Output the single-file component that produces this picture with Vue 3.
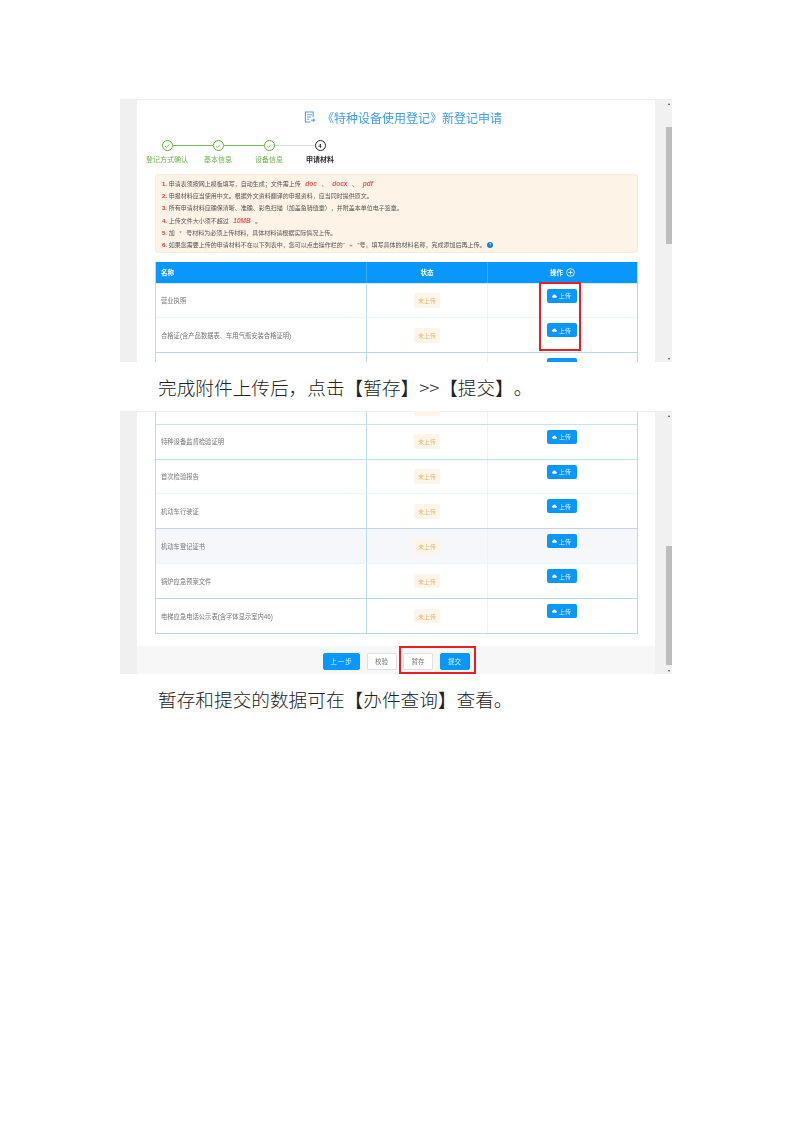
<script setup>
const steps = [
  { label: '登记方式确认', state: 'done' },
  { label: '基本信息', state: 'done' },
  { label: '设备信息', state: 'done' },
  { label: '申请材料', state: 'active' }
]
const rowsA = [
  { name: '营业执照', line: 'pale' },
  { name: '合格证(含产品数据表、车用气瓶安装合格证明)', line: 'blue' },
  { name: '', line: 'pale', cut: true }
]
const rowsB = [
  { name: '特种设备监督检验证明', line: 'thick' },
  { name: '首次检验报告', line: 'pale' },
  { name: '机动车行驶证', line: 'grey' },
  { name: '机动车登记证书', line: 'pale', hover: true },
  { name: '锅炉应急预案文件', line: 'blue' },
  { name: '电梯应急电话公示表(含字体显示室内46)', line: 'blue' }
]
</script>

<template>
  <div class="page">
    <section class="shot">
      <div class="main">
        <h1 class="title">
          <svg class="doc" viewBox="0 0 12 13" width="11" height="12">
            <path d="M10 6.500V1H1.500v11H7" fill="none" stroke="#4fa3ec" stroke-width="1.200" />
            <path d="M3.500 4h5M3.500 6.500h4M3.500 9h2" stroke="#4fa3ec" stroke-width="1.100" />
            <path d="M7.500 10h4M9.800 8.200 11.600 10l-1.800 1.800" fill="none" stroke="#4fa3ec" stroke-width="1.100" />
          </svg>
          <span>《特种设备使用登记》新登记申请</span>
        </h1>

        <div class="steps">
          <div v-for="(s, i) in steps" :key="s.label" class="step" :class="s.state">
            <div class="head">
              <i class="seg" :class="{ none: i === 0, grey: i === 3 }"></i>
              <span class="dot">
                <svg v-if="s.state === 'done'" viewBox="0 0 10 10" width="8" height="8">
                  <path d="M2.500 5.200 4.400 7l3.200-3.800" fill="none" stroke="#6bb84a" stroke-width="1" />
                </svg>
                <b v-else>4</b>
              </span>
              <i class="seg" :class="{ none: i === 3, grey: i === 2 }"></i>
            </div>
            <div class="label">{{ s.label }}</div>
          </div>
        </div>

        <div class="alert">
          <p><b>1.</b> 申请表须按网上模板填写，自动生成；文件需上传 <em>doc</em> 、 <em>docx</em> 、 <em>pdf</em></p>
          <p><b>2.</b> 申报材料应当使用中文。根据外文资料翻译的申报资料，应当同时提供原文。</p>
          <p><b>3.</b> 所有申请材料应确保清晰、准确、彩色扫描（加盖鱼骑缝章），并附盖本单位电子签章。</p>
          <p><b>4.</b> 上传文件大小须不超过 <em>10MB</em> 。</p>
          <p><b>5.</b> 加 <u>*</u> 号材料为必须上传材料，具体材料请根据实际情况上传。</p>
          <p><b>6.</b> 如果您需要上传的申请材料不在以下列表中，您可以点击操作栏的“ <u>+</u> ”号，填写具体的材料名称，完成添加后再上传。 <span class="info">?</span></p>
        </div>

        <div class="table">
          <div class="row header">
            <div class="c1">名称</div>
            <div class="c2">状态</div>
            <div class="c3">
              操作
              <svg viewBox="0 0 10 10" width="9" height="9">
                <circle cx="5" cy="5" r="4.300" fill="none" stroke="#fff" stroke-width="0.9" />
                <path d="M5 2.700v4.600M2.700 5h4.600" stroke="#fff" stroke-width="0.9" />
              </svg>
            </div>
          </div>
          <div v-for="r in rowsA" :key="r.name" class="row" :class="r.line">
            <div class="c1">{{ r.name }}</div>
            <div class="c2"><span v-if="!r.cut" class="tag">未上传</span></div>
            <div class="c3">
              <button class="upload">
                <template v-if="!r.cut">
                  <svg viewBox="0 0 10 8" width="5" height="4"><path d="M2.500 7.500a2.200 2.200 0 0 1-.3-4.400 3 3 0 0 1 5.700.3 2 2 0 0 1-.3 4.100z" fill="#fff" /></svg>
                  上传
                </template>
              </button>
            </div>
          </div>
        </div>
      </div>
      <div class="scrollbar">
        <i class="arrow up"></i>
        <i class="thumb first"></i>
        <i class="arrow down"></i>
      </div>
      <div class="mark mark-upload"></div>
    </section>

    <p class="caption">完成附件上传后，点击【暂存】&gt;&gt;【提交】。</p>

    <section class="shot">
      <div class="main second">
        <div class="table">
          <div class="row stub thick">
            <div class="c1"></div>
            <div class="c2"><span class="tag"></span></div>
            <div class="c3"></div>
          </div>
          <div v-for="r in rowsB" :key="r.name" class="row" :class="[r.line, { hover: r.hover }]">
            <div class="c1">{{ r.name }}</div>
            <div class="c2"><span class="tag">未上传</span></div>
            <div class="c3">
              <button class="upload">
                <svg viewBox="0 0 10 8" width="5" height="4"><path d="M2.500 7.500a2.200 2.200 0 0 1-.3-4.400 3 3 0 0 1 5.700.3 2 2 0 0 1-.3 4.100z" fill="#fff" /></svg>
                上传
              </button>
            </div>
          </div>
        </div>
        <div class="footer">
          <button class="btn primary wide">上一步</button>
          <button class="btn">校验</button>
          <button class="btn">暂存</button>
          <button class="btn primary">提交</button>
        </div>
      </div>
      <div class="scrollbar">
        <i class="arrow up"></i>
        <i class="thumb last"></i>
        <i class="arrow down"></i>
      </div>
      <div class="mark mark-save"></div>
    </section>

    <p class="caption">暂存和提交的数据可在【办件查询】查看。</p>
  </div>
</template>

<style scoped>
.page {
  width: 552px;
  margin-left: 120px;
  padding-top: 99px;
  font-family: "Liberation Sans", "Noto Sans CJK SC", sans-serif;
  text-spacing-trim: space-all;
}
.shot {
  position: relative;
  display: flex;
  height: 263px;
  overflow: hidden;
  background: #f0f0f0;
  filter: blur(0.45px);
}
.main {
  box-sizing: border-box;
  width: 518px;
  margin-left: 17px;
  padding: 0 17px 0 18px;
  background: #fff;
  border-top: 1px solid #eee;
}
.scrollbar {
  display: flex;
  flex-direction: column;
  align-items: flex-end;
  width: 17px;
  background: #f1f1f1;
  border-top: 1px solid #eee;
}
.arrow {
  width: 6px;
  height: 3px;
  margin: 3px 0 0;
  position: relative;
}
.arrow::after {
  content: "";
  position: absolute;
  left: 1.500px;
  top: 0;
  border-left: 1.500px solid transparent;
  border-right: 1.500px solid transparent;
}
.arrow.up::after { border-bottom: 2px solid #444; }
.arrow.down::after { border-top: 2px solid #444; }
.thumb {
  display: block;
  width: 6.500px;
  background: #bdbdbd;
}
.thumb.first { height: 117px; margin-top: 21px; margin-bottom: 111px; }
.thumb.last { height: 119px; margin-top: 128px; margin-bottom: 2px; }
.title {
  display: flex;
  align-items: center;
  justify-content: center;
  gap: 7px;
  height: 24px;
  margin: 5px 0 0 0;
  padding-left: 13px;
  font-size: 12px;
  font-weight: 400;
  color: #3f9cf0;
  font-family: "Noto Sans CJK SC", sans-serif;
}
.steps {
  display: flex;
  margin: 11px 0 0 -13.500px;
}
.step {
  width: 51px;
  text-align: center;
}
.head {
  display: flex;
  align-items: center;
}
.seg {
  flex: 1;
  height: 1.500px;
  background: #82b266;
}
.seg.none { background: none; }
.seg.grey { background: #d9d9e2; }
.dot {
  display: flex;
  align-items: center;
  justify-content: center;
  box-sizing: border-box;
  width: 11px;
  height: 11px;
  border: 1.300px solid #5cb531;
  border-radius: 50%;
}
.active .dot { border-color: #222; }
.dot b { font-size: 6px; line-height: 1; color: #222; }
.label {
  margin-top: 4px;
  font-size: 7px;
  line-height: 10px;
  white-space: nowrap;
  color: #6fb34a;
}
.active .label { color: #333; font-weight: 700; }
.alert {
  box-sizing: border-box;
  height: 79px;
  margin-top: 9px;
  padding: 3px 0 0 6px;
  background: #fdf3e7;
  border: 1px solid #f9ebd9;
  border-radius: 3px;
}
.alert p {
  height: 12.200px;
  margin: 0;
  font-size: 6px;
  line-height: 12.200px;
  white-space: pre;
  color: #555;
}
.alert b { color: #e0392f; }
.alert em { margin: 0 3px; color: #ee5a5a; font-weight: 700; font-size: 6.500px; }
.alert u { color: #ee4a4a; text-decoration: none; margin: 0 3px; }
.info {
  display: inline-flex;
  align-items: center;
  justify-content: center;
  vertical-align: middle;
  width: 6px;
  height: 6px;
  border-radius: 50%;
  background: #1c7fd6;
  color: #fff;
  font-size: 4px;
  line-height: 1;
}
.table {
  box-sizing: border-box;
  margin-top: 9px;
  border-left: 1px solid #b9dde8;
  border-right: 1px solid #bcd6ea;
}
.second .table {
  margin-top: 0;
}
.row {
  display: flex;
  box-sizing: border-box;
  height: 34.900px;
  font-size: 6.300px;
  color: #777;
  border-bottom: 1px solid #e4f8f8;
}
.row.blue { border-bottom-color: #b9d9e8; }
.row.grey { border-bottom-color: #c5d3e4; }
.row.thick { border-bottom: 1.500px solid #c5e4ee; }
.row.hover { background: #f5f7fa; }
.c1, .c2, .c3 { box-sizing: border-box; }
.c1 {
  display: flex;
  align-items: center;
  width: 211px;
  padding-left: 5px;
  border-right: 1px solid #b9dde8;
}
.c2 {
  display: flex;
  align-items: center;
  justify-content: center;
  width: 121px;
  border-right: 1px solid #e2f7f7;
}
.c3 {
  display: flex;
  flex: 1;
  justify-content: center;
  padding: 5px 2px 0 0;
}
.row.header {
  height: 21.500px;
  background: #0a97fb;
  color: #fff;
  font-weight: 700;
  font-size: 6.500px;
  border-bottom: 1px solid #cfeef8;
}
.header .c1, .header .c2 { border-right-color: #3aaafa; }
.header .c3 {
  align-items: center;
  gap: 3px;
  padding: 0;
}
.tag {
  display: flex;
  align-items: center;
  justify-content: center;
  width: 26px;
  height: 14.500px;
  border-radius: 2px;
  background: #fdf5ea;
  color: #e8b46c;
  font-size: 6px;
}
.upload {
  display: flex;
  align-items: center;
  justify-content: center;
  gap: 2px;
  width: 30px;
  height: 14px;
  padding: 0;
  border: 0;
  border-radius: 2px;
  background: #0a97fb;
  color: #d8eeff;
  font: 6px "Noto Sans CJK SC", sans-serif;
}
.row.stub { height: 12.700px; }
.stub .c2 { align-items: flex-start; }
.stub .tag { margin-top: -11px; }
.footer {
  display: flex;
  justify-content: flex-start;
  gap: 6.500px;
  height: 29px;
  margin: 11.500px -17px 0 -18px;
  padding: 7px 0 0 186px;
  background: #f7f7f7;
}
.btn {
  box-sizing: border-box;
  width: 30px;
  height: 17px;
  padding: 0;
  border: 1px solid #dcdfe6;
  border-radius: 2px;
  background: #fff;
  color: #777;
  font: 6.500px "Noto Sans CJK SC", sans-serif;
}
.btn.primary {
  border-color: #0a97fb;
  background: #0a97fb;
  color: #d8eeff;
}
.btn.wide { width: 37px; letter-spacing: 1px; }
.mark {
  position: absolute;
  box-sizing: border-box;
  border: 2px solid #ea1c24;
}
.mark-upload { left: 419px; top: 182.500px; width: 42px; height: 69px; }
.mark-save { left: 279px; top: 235px; width: 77px; height: 28px; }
.caption {
  display: flex;
  align-items: center;
  height: 49px;
  margin: 0;
  padding-left: 38px;
  font-size: 18.670px;
  color: #222;
  font-family: "Noto Sans CJK SC", "Liberation Serif", serif;
  font-weight: 300;
  white-space: pre;
}
</style>
